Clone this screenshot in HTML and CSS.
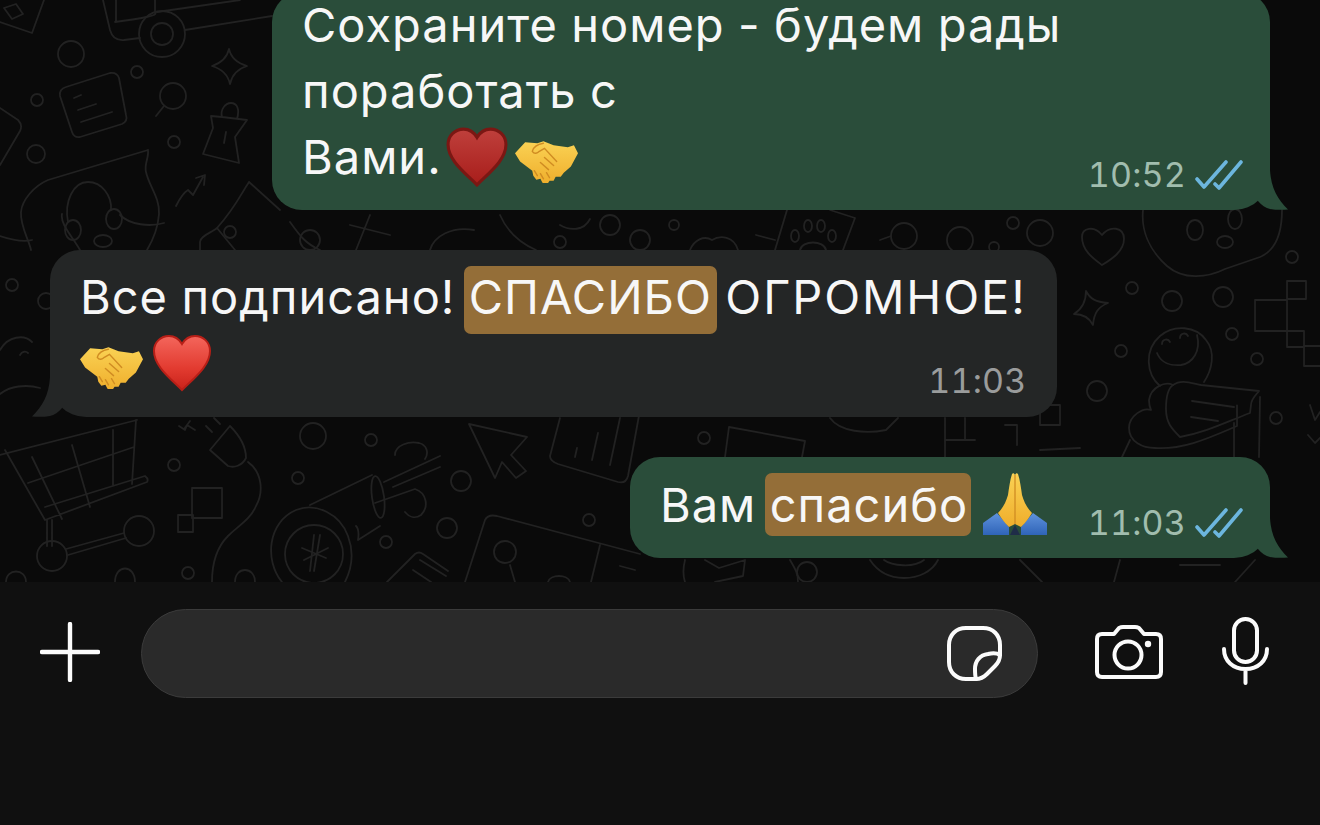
FILE: index.html
```html
<!DOCTYPE html>
<html lang="ru">
<head>
    <meta charset="UTF-8">
    <meta name="viewport" content="width=device-width, initial-scale=1.0">
    <title>Чат</title>
    <link rel="stylesheet" href="styles.css">
</head>
<body>

<!-- общие картинки: эмодзи и галочки -->
<svg class="sprite" aria-hidden="true">
    <defs>
        <linearGradient id="grad-heart" x1="0" y1="0" x2="0" y2="1">
            <stop offset="0" stop-color="#f4665c"/>
            <stop offset="0.6" stop-color="#e23b30"/>
            <stop offset="1" stop-color="#c9221a"/>
        </linearGradient>
        <linearGradient id="grad-heart-dark" x1="0" y1="0" x2="0" y2="1">
            <stop offset="0" stop-color="#bf403c"/>
            <stop offset="1" stop-color="#a81d1a"/>
        </linearGradient>
        <linearGradient id="grad-hand" x1="0" y1="0" x2="0" y2="1">
            <stop offset="0" stop-color="#fad254"/>
            <stop offset="1" stop-color="#efae2c"/>
        </linearGradient>
        <linearGradient id="grad-sleeve" x1="0" y1="0" x2="0" y2="1">
            <stop offset="0" stop-color="#5f92dc"/>
            <stop offset="1" stop-color="#2f64b8"/>
        </linearGradient>
        <symbol id="heart" viewBox="0 0 60 58">
            <path d="M30 56C18 44 2 32 2 17 2 8 9 2 17 2c6 0 10 3 13 8 3-5 7-8 13-8 8 0 15 6 15 15 0 15-16 27-28 39z"/>
        </symbol>
        <symbol id="handshake" viewBox="0 0 62 42">
            <path fill="url(#grad-hand)" d="M0 13 10 2l12 1 6-2 10 4 14 2 6-2 4 8-7 13-7 6-3 4-5 0-2 4-4 0-2 3-5-1-2-4-4 1-3-4-1-5-12-9z"/>
            <path fill="none" stroke="#d08c22" stroke-width="1.4" stroke-linecap="round" d="M17 11c1-4 5-7 11-8M17 11c2 3 5 2 7 0l5-3 12 13M38 25l-9-8M33 29l-8-7M19 30l3 5M25 33l3 5M31 32l3 5"/>
        </symbol>
        <symbol id="pray" viewBox="0 0 64 62">
            <path fill="url(#grad-sleeve)" d="M0 50 14 40l12 14v8H0zM64 50 50 40 38 54v8h26z"/>
            <path fill="url(#grad-hand)" d="M29 1c1-1 2-1 3 1 1-2 2-2 3-1 2 6 3 14 4 21 2 7 5 13 10 18-3 5-6 9-11 14l-6-3-6 3c-5-5-8-9-11-14 5-5 8-11 10-18 1-7 2-15 4-21z"/>
            <path fill="none" stroke="#d08c22" stroke-width="1.3" d="M32 2v49"/>
            <path fill="#1f2c48" d="M27 62l5-10 5 10z"/>
        </symbol>
        <symbol id="checks" viewBox="0 0 48 32">
            <path fill="none" stroke="#6cb6de" stroke-width="3.6" stroke-linecap="round" stroke-linejoin="round" d="M2 20l7 8L31 3M20 25l4 4L46 3"/>
        </symbol>
    </defs>
</svg>

<main class="chat">
    <!-- обои чата -->
    <svg class="doodles" viewBox="0 0 1320 582" aria-hidden="true">
        <g class="doodle-lines">
            <!-- слева сверху -->
            <path d="M0 22l32 11 12-33M4 8l12-4 7 10-11 5z"/>
            <circle cx="71" cy="54" r="13"/><circle cx="137" cy="72" r="6"/><circle cx="37" cy="100" r="6"/><circle cx="36" cy="154" r="9"/><circle cx="174" cy="142" r="6"/>
            <path d="M66 87l44-14q7-1 9 5l7 37q2 6-4 9l-42 13q-6 1-8-5L60 96q-1-7 6-9z"/>
            <path d="M74 98l7-3M78 110l18-6M81 122l31-10"/>
            <circle cx="173" cy="96" r="13"/><path d="M164 106l-8 10"/>
            <path d="M229 49c2 9 8 14 18 17-10 3-15 9-17 18-2-9-8-15-18-18 9-3 15-8 17-17z"/>
            <path d="M222 117l-11 -1 2 12-10 26 36 9-4-26 12-17zM222 117c-2-7 3-14 9-14 6 0 9 6 6 16M226 132l-2 11"/>
            <path d="M176 206c4-8 7-13 12-16l5 5 10-18M196 178l9-3-1 10"/>
            <path d="M0 108l18 12c4 4 4 7 2 11L0 165"/>
            <path d="M148 150l-100 30c-14 6-26 20-27 32-1 14 8 28 10 38M148 150c1 8-4 14-2 22 3 14 14 26 13 42-1 14-6 26-12 36"/>
            <path d="M68 222c-4-20 5-40 20-40 14 0 24 14 23 28"/>
            <ellipse cx="73" cy="230" rx="8" ry="10"/><ellipse cx="114" cy="219" rx="8" ry="10"/><ellipse cx="103" cy="241" rx="9" ry="6"/>
            <circle cx="162" cy="34" r="23"/><circle cx="162" cy="34" r="11"/>
            <path d="M185 30l87-14M103 0l7 30q3 11 14 10l16-2M115 22q45-6 40-9M157 12l83-12M116 0v22M155 0v12"/>
            <path d="M249 182l31 28M249 182c-8 12-14 26-32 46-6 5-17 8-17 14v8M217 228l18 22"/>
            <!-- между сообщениями -->
            <circle cx="674" cy="225" r="5"/><circle cx="640" cy="240" r="10"/>
            <path d="M690 250c4-10 14-15 22-10 8-5 22-4 26 10M756 235l19 5M787 210l-12 40M855 218l-12 32M830 210l25 8"/>
            <ellipse cx="795" cy="236" rx="4" ry="6"/><ellipse cx="808" cy="226" rx="4" ry="6"/><ellipse cx="821" cy="226" rx="4" ry="6"/><ellipse cx="832" cy="236" rx="4" ry="6"/>
            <path d="M800 250c2-10 24-10 26 0"/>
            <circle cx="904" cy="236" r="13"/><path d="M880 240l11-4"/>
            <circle cx="960" cy="240" r="13"/><circle cx="1013" cy="223" r="6"/><circle cx="1040" cy="233" r="13"/><circle cx="994" cy="247" r="5"/>
            <path d="M80 250c-8-14-20-26-18-36M120 215c10 10 30 12 44 8M290 222c10 14 16 22 30 28M350 225l40 10M370 215l-14 35M430 250c4-14 22-24 44-20M500 215c6 14 16 26 36 35M560 225c10 6 24 6 30-6"/>
            <circle cx="230" cy="232" r="6"/><circle cx="310" cy="240" r="10"/><circle cx="560" cy="242" r="6"/><circle cx="610" cy="225" r="10"/>
            <!-- справа -->
            <path d="M1143 210c-2 20 6 40 24 56 16 14 40 12 58 3l35-12c14-6 22-22 22-47"/>
            <ellipse cx="1195" cy="230" rx="8" ry="10"/><ellipse cx="1235" cy="219" rx="7" ry="10"/><ellipse cx="1225" cy="242" rx="8" ry="6"/>
            <path d="M1102 265c-8-6-20-14-20-28 0-9 12-12 20-2 8-10 22-8 22 4 0 12-12 20-22 26z"/>
            <circle cx="1132" cy="288" r="6"/><circle cx="1172" cy="301" r="10"/><circle cx="1223" cy="297" r="10"/><circle cx="1292" cy="257" r="6"/><circle cx="1232" cy="334" r="6"/><circle cx="1257" cy="359" r="6"/><circle cx="1121" cy="351" r="6"/><circle cx="1097" cy="391" r="10"/><circle cx="1276" cy="418" r="6"/>
            <path d="M1086 291c4 8 10 11 22 12-10 4-14 10-15 22-4-8-10-11-19-11 8-5 12-12 12-23z"/>
            <rect x="1287" y="281" width="19" height="18"/><rect x="1255" y="300" width="32" height="31"/><rect x="1287" y="331" width="17" height="16"/><rect x="1304" y="346" width="20" height="20"/>
            <path d="M1160 386c-14-12-16-36 0-50 14-12 36-10 46 4 10 12 6 30-2 42"/>
            <path d="M1157 353c4 10 14 13 24 12 12-2 20-14 16-30M1162 344c0-5 6-6 8-2M1180 338c0-5 6-6 8-2"/>
            <path d="M1173 385c-8-4-22 2-24 15 0 4 1 8 2 10-8-3-22 6-22 18 0 14 14 20 26 20 30 2 58-12 82-22 0-24 0-30 0-2"/>
            <path d="M1173 385c8-6 18-2 28 0l58 6c-3 4-8 8-8 14l-1 8c-26 10-46 20-70 24-8-8-14-14-14-28 0-10 1-20 7-24zM1192 401l42 6M1191 417l27 4M1234 457v-34M1259 457l1-60"/>
            <path d="M1310 405l5 15 5-8M1308 435l7 8 5-5"/>
            <rect x="1040" y="405" width="20" height="20"/>
            <path d="M1040 450l40-2M1130 440l-8 17"/>
            <!-- слева посередине -->
            <circle cx="46" cy="301" r="8"/><circle cx="12" cy="285" r="6"/>
            <path d="M0 350c8-14 24-16 32-8M32 240c-8 2-20 0-32-4M40 388c-14-4-30-2-40 6"/>
            <path d="M20 355c2-4 6-4 8-2"/>
            <!-- корзина -->
            <path d="M0 455l137-35M5 450l40 70 102-38M147 482q2-3-2-6L45 507M32 457l30 62M72 445l18 62M113 430v55M136 420l-4 64M28 483l106-36"/>
            <path d="M47 520v26M52 520v26M66 549l58-16M68 555l58-17"/>
            <circle cx="52" cy="556" r="15"/><circle cx="139" cy="531" r="15"/>
            <path d="M190 421l-6 8M195 430l-8-5-2 5-6-4"/>
            <path d="M230 426l-20 24 18 16c6 2 14 0 18-8 0-10-6-22-16-32zM212 432l-6-6M220 424l-6-6"/>
            <path d="M248 462c14 10 16 30 8 44-6 14-18 20-28 30-12 12-16 30-16 46"/>
            <circle cx="174" cy="465" r="6"/><circle cx="298" cy="478" r="6"/><circle cx="313" cy="436" r="13"/><circle cx="371" cy="440" r="6"/><circle cx="461" cy="481" r="10"/><circle cx="447" cy="528" r="10"/><circle cx="386" cy="542" r="6"/><circle cx="188" cy="573" r="6"/>
            <rect x="192" y="488" width="30" height="30"/><rect x="178" y="515" width="15" height="17"/>
            <path d="M6 582c0-14 20-14 20 0M115 582c0-18 20-18 20 0M235 582c0-16 20-16 20 0"/>
            <!-- фен -->
            <path d="M282 582c-18-22-14-60 14-72 20-8 44 4 52 26 6 16 4 32-3 46"/>
            <circle cx="314" cy="554" r="29"/>
            <path d="M310 505l62-30M358 540l22-14M358 540c0 0 2-10-2-14"/>
            <ellipse cx="378" cy="497" rx="6" ry="21" transform="rotate(-8 378 497)"/>
            <path d="M302 548l24 10M304 560l24-12M314 535l-4 36M320 535l-6 36"/>
            <path d="M384 482l56-26M393 487l47-20M375 503l40-14c12 4 14 18 6 26-6 4-12 2-16-3M395 455c0-10 14-14 24-12 8 2 10 10 6 16"/>
            <path d="M387 582l28-28q4-3 8 0l25 17M420 560l26 16M413 570l18 12"/>
            <!-- курсор и экран -->
            <path d="M469 424l58 13-16 18 15 16-10 7-14-16-7 16z"/>
            <path d="M560 418l-10 38q0 5 8 8l60 18q8 2 10-6l12-66M575 457l2-9M592 460l6-27M610 465l10-47"/>
            <circle cx="589" cy="520" r="6"/>
            <path d="M465 582l20-62q3-6 12-4l143 38M600 545l-9 37M635 570l-15-4"/>
            <circle cx="505" cy="552" r="11"/><path d="M510 565l5 17M548 582c2-8 20-8 22 0"/>
            <!-- над полем -->
            <circle cx="704" cy="438" r="6"/>
            <path d="M725 457l4-30 76 14-3 16M830 418c10 14 36 16 56 12l12-12M945 418v39M945 440h30M965 418v22M1005 425h12v20"/>
            <path d="M685 582c-2-6-2-14 0-22M705 560l14 8 26-8-2 16-28 6M790 560c6 10 8 14 8 22"/>
            <circle cx="807" cy="572" r="10"/>
            <path d="M870 560c8 12 20 18 34 18s28-6 34-18M884 560c8 6 30 8 40 0M1020 560l22 22M1120 560l-6 22M1180 565h40M1255 560l-20 22"/>
        </g>
    </svg>

    <div class="msg msg-out msg-first">
        <p class="line">Сохраните номер - будем рады</p>
        <p class="line">поработать с</p>
        <div class="last-row">
            <p class="line">Вами.<svg class="emoji heart-old"><use href="#heart"/></svg><svg class="emoji shake shake-first"><use href="#handshake"/></svg></p>
            <div class="meta"><span class="time">10:52</span><svg class="checks"><use href="#checks"/></svg></div>
        </div>
        <svg class="tail" viewBox="0 0 30 40"><path d="M12 0c1 18 8 30 18 39.5-6 .5-12 .5-18-.5-4-1-9-4-12-8V0z"/></svg>
    </div>

    <div class="msg msg-in">
        <p class="line">Все подписано! <mark class="hit">СПАСИБО</mark> <span class="caps">ОГРОМНОЕ!</span></p>
        <div class="last-row">
            <p class="line"><svg class="emoji shake"><use href="#handshake"/></svg><svg class="emoji heart-new"><use href="#heart"/></svg></p>
            <div class="meta"><span class="time">11:03</span></div>
        </div>
        <svg class="tail" viewBox="0 0 30 40"><path d="M12 0c1 18 8 30 18 39.5-6 .5-12 .5-18-.5-4-1-9-4-12-8V0z"/></svg>
    </div>

    <div class="msg msg-out msg-last">
        <div class="last-row">
            <p class="line">Вам <mark class="hit hit-small">спасибо</mark> <svg class="emoji pray"><use href="#pray"/></svg></p>
            <div class="meta"><span class="time">11:03</span><svg class="checks"><use href="#checks"/></svg></div>
        </div>
        <svg class="tail" viewBox="0 0 30 40"><path d="M12 0c1 18 8 30 18 39.5-6 .5-12 .5-18-.5-4-1-9-4-12-8V0z"/></svg>
    </div>
</main>

<footer class="composer">
    <svg class="btn-plus" viewBox="0 0 60 60">
        <path d="M30 2v56M2 30h56"/>
    </svg>
    <div class="input-box">
        <svg class="btn-sticker" viewBox="0 0 55 55">
            <path d="M19 2h17c10 0 17 7 17 17v10c0 5-2 8-5 11l-8 8c-3 3-6 5-11 5H19C9 53 2 46 2 36V19C2 9 9 2 19 2z"/>
            <path d="M53 29c-3-2-8-2-12-1-8 1-13 7-13 15 0 4 0 7 1 10"/>
        </svg>
    </div>
    <svg class="btn-camera" viewBox="0 0 68 54">
        <path d="M7 9h12l5-6q2-1 4-1h12q2 0 4 1l5 6h12q5 0 5 5v33q0 5-5 5H7q-5 0-5-5V14q0-5 5-5z"/>
        <circle cx="33" cy="30" r="13.5"/>
        <circle class="dot" cx="53" cy="19" r="3.2"/>
    </svg>
    <svg class="btn-mic" viewBox="0 0 47 68">
        <rect x="12" y="2" width="23" height="43" rx="11.5"/>
        <path d="M2 32c0 12 9 20 21.500 20S45 44 45 32M23.500 52v14"/>
    </svg>
</footer>

</body>
</html>
```

FILE: styles.css
```css
* {
    box-sizing: border-box;
}
html, body {
    height: 100%;
}
body {
    margin: 0;
    background-color: #101010;
    font-family: Inter, "Noto Sans", sans-serif;
    color: #f7f7f7;
    overflow: hidden;
}
.sprite {
    position: absolute;
    width: 0;
    height: 0;
}

/* чат */
.chat {
    position: relative;
    height: 582px;
    padding: 0 50px 24px;
    background-color: #0a0a0a;
    overflow: hidden;
    display: flex;
    flex-direction: column;
    justify-content: flex-end;
    gap: 40px;
}
.doodles {
    position: absolute;
    top: 0;
    left: 0;
    width: 1320px;
    height: 582px;
}
.doodle-lines {
    fill: none;
    stroke: #222222;
    stroke-width: 1.8;
    stroke-linecap: round;
    stroke-linejoin: round;
}

/* сообщения */
.msg {
    position: relative;
    flex: none;
    padding-left: 30px;
    padding-right: 27px;
    border-radius: 30px;
}
.msg-out {
    align-self: flex-end;
    background-color: #2a4d3a;
    fill: #2a4d3a;
    border-bottom-right-radius: 36px;
}
.msg-in {
    align-self: flex-start;
    background-color: #242626;
    fill: #242626;
    padding-top: 14px;
    padding-right: 30px;
    padding-bottom: 21px;
    border-bottom-left-radius: 36px;
}
.msg-first {
    width: 998px;
    padding-bottom: 20px;
}
.msg-last {
    padding-top: 15px;
    padding-bottom: 20px;
}
.line {
    margin: 0;
    font-size: 47px;
    line-height: 66px;
    letter-spacing: 1px;
    word-spacing: -0.8px;
    white-space: nowrap;
}
.caps {
    letter-spacing: 1.9px;
}
.last-row {
    display: flex;
    justify-content: space-between;
    align-items: flex-end;
    gap: 41px;
}
.meta {
    display: flex;
    align-items: center;
    gap: 9px;
    height: 32px;
    margin-bottom: -1px;
}
.time {
    font-size: 34px;
    line-height: 32px;
    font-variant-numeric: tabular-nums;
    letter-spacing: 0.2px;
    color: #a1bdae;
}
.msg-in .time {
    color: #9a9c9c;
}
.checks {
    width: 48px;
    height: 32px;
}
.tail {
    position: absolute;
    right: -18px;
    bottom: 0;
    width: 30px;
    height: 40px;
}
.msg-in .tail {
    right: auto;
    left: -18px;
    transform: scaleX(-1);
}
.hit {
    display: inline-block;
    height: 68px;
    line-height: 62px;
    padding: 0 5px;
    margin: 2px -5px -4px;
    vertical-align: top;
    background-color: #946e38;
    border-radius: 7px;
    color: #f7f7f7;
}
.hit-small {
    height: 63px;
    line-height: 64px;
    padding: 0 3px 0 5px;
    margin: 1px -5px 2px;
}

/* эмодзи */
.emoji {
    vertical-align: middle;
    margin-top: -10px;
    margin-bottom: -10px;
}
.heart-old {
    width: 62px;
    height: 60px;
    margin-top: -14px;
    margin-bottom: -6px;
    margin-left: 4px;
    fill: url(#grad-heart-dark);
    stroke: #7b1713;
    stroke-width: 3;
}
.heart-new {
    width: 60px;
    height: 58px;
    margin-top: -14px;
    margin-bottom: -6px;
    margin-left: 9px;
    fill: url(#grad-heart);
    stroke: #b81f17;
    stroke-width: 2;
}
.shake {
    width: 63px;
    height: 43px;
}
.shake-first {
    margin-left: 7px;
}
.pray {
    width: 64px;
    height: 62px;
    margin-top: -15px;
    margin-bottom: -5px;
    margin-left: 3px;
}

/* нижняя панель */
.composer {
    height: 243px;
    padding: 27px 0 0 40px;
    background-color: #101010;
    display: flex;
    align-items: flex-start;
}
.composer svg {
    fill: none;
    stroke: #fbfbfb;
    stroke-linecap: round;
    stroke-linejoin: round;
    flex: none;
}
.btn-plus {
    width: 60px;
    height: 60px;
    margin-top: 13px;
    stroke-width: 4.4;
}
.input-box {
    width: 897px;
    height: 89px;
    margin-left: 41px;
    padding-right: 35px;
    background-color: #2a2a2a;
    border: 1px solid #3b3b3b;
    border-radius: 45px;
    display: flex;
    align-items: center;
    justify-content: flex-end;
}
.btn-sticker {
    width: 55px;
    height: 55px;
    stroke-width: 4;
}
.btn-camera {
    width: 68px;
    height: 54px;
    margin-top: 16px;
    margin-left: 57px;
    stroke-width: 4;
}
.btn-camera .dot {
    fill: #fbfbfb;
    stroke: none;
}
.btn-mic {
    width: 47px;
    height: 68px;
    margin-top: 8px;
    margin-left: 59px;
    stroke-width: 4;
}
```
